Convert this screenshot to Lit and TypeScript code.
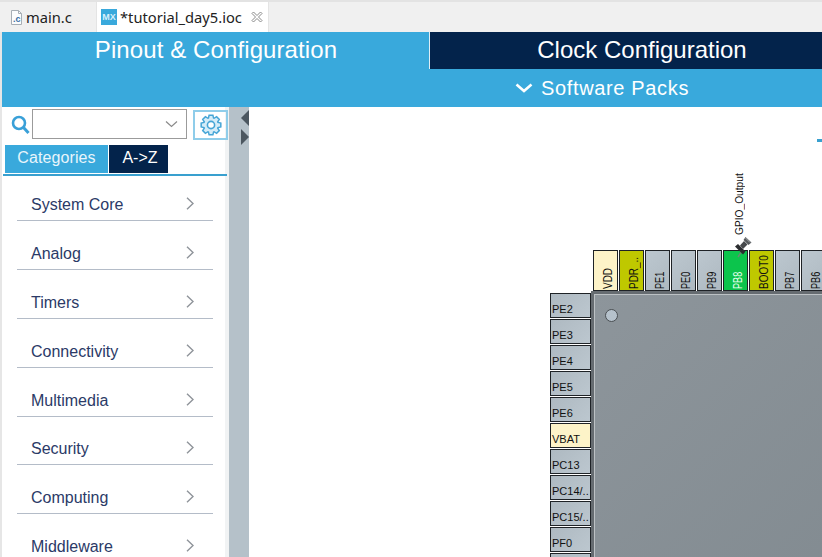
import { LitElement, html, css, svg } from "lit";
import { customElement } from "lit/decorators.js";

const CATS = ["System Core", "Analog", "Timers", "Connectivity", "Multimedia", "Security", "Computing", "Middleware"];
type Pin = { n: string; c: string };
const TOP: Pin[] = [
  { n: "VDD", c: "pw" }, { n: "PDR_..", c: "ol" }, { n: "PE1", c: "" }, { n: "PE0", c: "" }, { n: "PB9", c: "" },
  { n: "PB8", c: "gr" }, { n: "BOOT0", c: "ol" }, { n: "PB7", c: "" }, { n: "PB6", c: "" },
];
const LEFT: Pin[] = [
  { n: "PE2", c: "" }, { n: "PE3", c: "" }, { n: "PE4", c: "" }, { n: "PE5", c: "" }, { n: "PE6", c: "" },
  { n: "VBAT", c: "pw" }, { n: "PC13", c: "" }, { n: "PC14/..", c: "" }, { n: "PC15/..", c: "" }, { n: "PF0", c: "" }, { n: "", c: "" },
];

function gearPath(cx: number, cy: number, rOut: number, rIn: number, teeth: number) {
  const pts: string[] = [];
  const step = (Math.PI * 2) / teeth;
  for (let i = 0; i < teeth; i++) {
    const a = i * step - Math.PI / 2;
    const offs: [number, number][] = [
      [rIn, -0.5], [rOut, -0.27], [rOut, 0.27], [rIn, 0.5],
    ];
    for (const [r, o] of offs) {
      const t = a + o * step * 0.9;
      pts.push(`${(cx + r * Math.cos(t)).toFixed(2)} ${(cy + r * Math.sin(t)).toFixed(2)}`);
    }
  }
  return "M" + pts.join("L") + "Z";
}

@customElement("app-root")
export class AppRoot extends LitElement {
  static styles = css`
    :host { display: block; width: 822px; height: 557px; overflow: hidden; font-family: "Liberation Sans", Arial, sans-serif; background: #fff; }
    * { box-sizing: border-box; }
    .tabs { height: 32px; background: #f0f0f0; border-top: 2px solid #e3e3e3; display: flex; padding-left: 2px; font-family: "Noto Sans", sans-serif; font-size: 14.7px; color: #222; }
    .tab { display: flex; align-items: center; height: 30px; flex: none; }
    .t1 { width: 95px; padding-left: 7px; gap: 2px; border-right: 1px solid #e4e4e4; }
    .t2 { width: 172px; background: #fff; padding-left: 4px; gap: 3px; border-right: 1px solid #e4e4e4; }
    .mx { width: 16px; height: 16px; background: #39a9dc; color: #d8f0fb; font: bold 9px "Liberation Sans", sans-serif; display: flex; align-items: center; justify-content: center; }
    .close { margin-left: 6px; display: flex; }
    .page { height: 525px; padding-left: 2px; background: #e6e6e6; display: flex; flex-direction: column; }
    .head { background: #39a9dc; color: #fff; height: 75px; flex: none; }
    .htabs { display: flex; height: 37px; }
    .htab { display: flex; align-items: center; justify-content: center; font-size: 24px; height: 37px; padding-bottom: 1px; }
    .pin-tab { width: 428px; border-right: 1px solid #dfeef6; letter-spacing: .1px; padding-left: 1px; }
    .clk { flex: 1; background: #03234b; padding-left: 32px; }
    .packs { height: 38px; display: flex; align-items: center; gap: 8px; font-size: 20px; letter-spacing: .65px; padding-left: 513px; }
    .body { flex: 1; display: flex; min-height: 0; background: #fff; }
    .side { width: 227px; flex: none; background: linear-gradient(to right, #fff 223px, #f1f3f4 223px); display: flex; flex-direction: column; overflow: hidden; }
    .search { display: flex; align-items: flex-start; height: 38px; flex: none; padding: 2px 0 0 9px; }
    .lens { margin-top: 6px; flex: none; display: flex; }
    .combo { width: 155px; height: 30px; flex: none; border: 1px solid #9b9b9b; margin-left: 2px; display: flex; align-items: center; justify-content: flex-end; padding-right: 8px; }
    .gear { width: 35px; height: 30px; flex: none; margin: 1px 0 0 6px; border: 2px solid #8fcdea; display: flex; align-items: center; justify-content: center; }
    .ctabs { display: flex; flex: none; padding-left: 3px; height: 29px; color: #fff; font-size: 16px; }
    .ct { height: 28px; display: flex; align-items: center; justify-content: center; padding-bottom: 3px; }
    .ct.a { width: 104px; background: #39a9dc; color: #e8f5fb; letter-spacing: .1px; border-right: 1px solid #fff; }
    .ct.b { width: 59px; background: #03234b; padding-left: 3px; }
    .rule { height: 2px; background: #39a0cf; margin-left: 1px; width: 224px; flex: none; }
    .cats { padding: 5.4px 0 0 15px; display: flex; flex-direction: column; gap: 8.8px; flex: none; }
    .cat { width: 196px; height: 40px; display: flex; align-items: flex-end; justify-content: space-between; border-bottom: 1px solid #b4bcc8; padding: 0 19px 6px 14px; color: #2b3a67; font-size: 16px; line-height: 19px; flex: none; }
    .chev { margin-bottom: 4px; display: flex; }
    .split { width: 20px; flex: none; background: #b5c1c9; position: relative; }
    .tri { position: absolute; width: 0; height: 0; border-style: solid; }
    .t-l { left: 12px; top: 3px; border-width: 8px 8px 8px 0; border-color: transparent #4c5760 transparent transparent; }
    .t-r { left: 12px; top: 22px; border-width: 8px 0 8px 8px; border-color: transparent transparent transparent #4c5760; }
    .canvas { flex: 1; position: relative; overflow: hidden; background: #fff; }
    .mark { position: absolute; left: 568px; top: 32px; width: 6px; height: 3px; background: #39a0cf; }
    .gpio { position: absolute; left: 484px; top: 66px; writing-mode: vertical-rl; transform: rotate(180deg); font-size: 10.2px; height: 62px; line-height: 14px; color: #111; text-align: left; white-space: nowrap; }
    .thumb { position: absolute; left: 485px; top: 129px; display: flex; z-index: 2; }
    .top-pins { position: absolute; left: 344px; top: 143px; display: flex; gap: 1px; }
    .left-pins { position: absolute; left: 301px; top: 186px; display: flex; flex-direction: column; gap: 1px; }
    .pin { border: 1px solid #1e2226; background: linear-gradient(135deg, #aeb9c1, #bcc7cf); color: #111; font-size: 11px; }
    .top-pins .pin { width: 25px; height: 41px; writing-mode: vertical-rl; transform: rotate(180deg); display: flex; align-items: flex-end; justify-content: flex-start; padding: 1px 0 0 3px; line-height: 12px; font-size: 12px; white-space: nowrap; overflow: hidden; }
    .top-pins .pin span { display: inline-block; transform-origin: top; transform: scaleY(.76); }
    .top-pins .pin.pw span, .top-pins .pin.ol span { transform: scaleY(.83); }
    .left-pins .pin { width: 41px; height: 25px; display: flex; align-items: flex-end; padding: 0 0 1px 1px; line-height: 13px; white-space: nowrap; overflow: hidden; }
    .pin.pw { background: #fdf3c8; }
    .pin.ol { background: #bfc800; }
    .pin.gr { background: #0cc44c; color: #eafff0; }
    .chip { position: absolute; left: 342px; top: 184px; width: 300px; height: 400px; background: linear-gradient(135deg, #8d959b, #7f888e); border: 3px solid #666c71; border-right: 0; border-bottom: 0; }
    .chip::before { content: ""; position: absolute; inset: 0; border-left: 1px solid #bcc1c4; border-top: 1px solid #bcc1c4; }
    .dot { position: absolute; left: 11px; top: 15px; width: 13px; height: 13px; border-radius: 50%; background: #b6c2cc; border: 1px solid #4a4f53; }
  `;

  private cFile() {
    return html`<svg width="15" height="17" viewBox="0 0 15 17"><path d="M2.5 1.5h7l3 3v11h-10z" fill="#fbfcfd" stroke="#a7aeb5"/><path d="M9.5 1.5v3h3" fill="none" stroke="#a7aeb5"/><text x="4" y="13" font-size="9" font-weight="700" font-family="Liberation Sans" fill="#3a6ea5">.c</text></svg>`;
  }

  private closeIcon() {
    return html`<svg width="12" height="12" viewBox="0 0 12 12"><path d="M1 2.5L2.5 1 6 4.5 9.5 1 11 2.5 7.5 6 11 9.5 9.5 11 6 7.5 2.5 11 1 9.5 4.5 6z" fill="#fff" stroke="#8a8a8a"/></svg>`;
  }

  private gearIcon() {
    return html`<svg width="22" height="22" viewBox="0 0 22 22">${svg`<path d=${gearPath(11, 11, 10, 7.4, 8)} fill="#d4ecf8" stroke="#45a5d6" stroke-width="1.5"/>`}<circle cx="11" cy="11" r="3.6" fill="#fff" stroke="#45a5d6" stroke-width="1.6"/></svg>`;
  }

  private chevron() {
    return html`<svg width="8" height="13" viewBox="0 0 8 13"><path d="M1 .8l6 5.7-6 5.7" fill="none" stroke="#8f949a" stroke-width="1.4"/></svg>`;
  }

  private pinIcon() {
    return html`<svg width="18" height="22" viewBox="0 0 18 22"><path d="M8 15l-4 6" stroke="#6f8476" stroke-width="1.4"/><path d="M1 10.5L4 8l7.5 7.5L9 18.5z" fill="#2b2d30"/><path d="M6 9.5L10 5l3.5 3.5L9 13z" fill="#45484b"/><path d="M9.5 4L11.5 1 17.5 6.5 14.5 9z" fill="#55595c"/><path d="M11.5 2l4.5 4.5" stroke="#a5a9ac" stroke-width="1"/></svg>`;
  }

  render() {
    return html`
      <div class="tabs">
        <div class="tab t1">${this.cFile()}<span>main.c</span></div>
        <div class="tab t2"><span class="mx">MX</span><span>*tutorial_day5.ioc</span><span class="close">${this.closeIcon()}</span></div>
      </div>
      <div class="page">
        <div class="head">
          <div class="htabs">
            <div class="htab pin-tab">Pinout &amp; Configuration</div>
            <div class="htab clk">Clock Configuration</div>
          </div>
          <div class="packs">
            <svg width="18" height="12" viewBox="0 0 18 12"><path d="M1.5 2.5L9 9l7.5-6.5" fill="none" stroke="#fff" stroke-width="2.6"/></svg>
            <span>Software Packs</span>
          </div>
        </div>
        <div class="body">
          <div class="side">
            <div class="search">
              <span class="lens"><svg width="19" height="20" viewBox="0 0 19 20"><circle cx="8" cy="8" r="6" fill="none" stroke="#39a0d8" stroke-width="2.6"/><path d="M12.5 12.5l5 5.5" stroke="#39a0d8" stroke-width="3"/></svg></span>
              <div class="combo"><svg width="13" height="8" viewBox="0 0 13 8"><path d="M1 1.5l5.5 5 5.5-5" fill="none" stroke="#8a8a8a" stroke-width="1.2"/></svg></div>
              <div class="gear">${this.gearIcon()}</div>
            </div>
            <div class="ctabs"><div class="ct a">Categories</div><div class="ct b">A-&gt;Z</div></div>
            <div class="rule"></div>
            <div class="cats">
              ${CATS.map((c) => html`<div class="cat"><span>${c}</span><span class="chev">${this.chevron()}</span></div>`)}
            </div>
          </div>
          <div class="split"><span class="tri t-l"></span><span class="tri t-r"></span></div>
          <div class="canvas">
            <div class="mark"></div>
            <div class="gpio">GPIO_Output</div>
            <div class="top-pins">${TOP.map((p) => html`<div class="pin ${p.c}"><span>${p.n}</span></div>`)}</div>
            <div class="left-pins">${LEFT.map((p) => html`<div class="pin ${p.c}">${p.n}</div>`)}</div>
            <div class="chip"><div class="dot"></div></div>
            <div class="thumb">${this.pinIcon()}</div>
          </div>
        </div>
      </div>
    `;
  }
}
